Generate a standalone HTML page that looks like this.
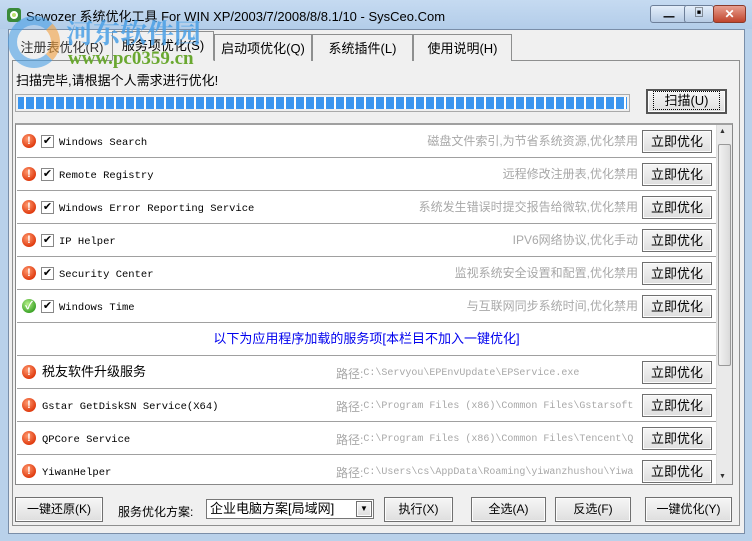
<!DOCTYPE html><html><head><meta charset="utf-8"><style>
*{box-sizing:border-box;margin:0;padding:0}
body{width:752px;height:541px;overflow:hidden;position:relative;background:#b9d1ea;font-family:"Liberation Sans","Noto Sans CJK SC",sans-serif;font-size:12px;color:#000}
.a{position:absolute}
.win{left:8px;top:29px;width:737px;height:505px;background:#f0f0f0;border:1px solid #7a8ea8}
.tab{top:34px;height:27px;background:#f0f0f0;border:1px solid #8e8f8f;border-bottom:none;text-align:center;line-height:27px;font-size:13px}
.btn{background:linear-gradient(#f6f6f6,#dedede);border:1px solid #707070;text-align:center;font-size:12px;box-shadow:inset 0 0 0 1px #fcfcfc}
.row{left:17px;width:699px;height:33px;border-bottom:1px solid #a0a0a0;background:#fff}
.ico{left:5px;top:9px;width:14px;height:14px;border-radius:50%;background:radial-gradient(circle at 40% 35%,#ff9a70,#e03c10 70%);color:#fff;font-weight:bold;font-size:11px;text-align:center;line-height:14px}
.ok{background:radial-gradient(circle at 40% 35%,#b8f08a,#3fa52a 70%)}
.cb{left:24px;top:10px;width:13px;height:13px;border:1px solid #888;background:#fff;font-size:11px;line-height:11px;text-align:center}
.nm{left:42px;top:12px;line-height:13px;height:13px;font-family:"Liberation Mono",monospace;font-size:10.5px;white-space:nowrap}
.ds{right:78px;top:0;line-height:32px;color:#a8a8a8;font-size:12px;white-space:nowrap}
.pt{left:319px;top:11px;line-height:14px;color:#a8a8a8;font-family:"Liberation Mono",monospace;font-size:10px;white-space:nowrap;width:301px;overflow:hidden}
.pt b{font-family:"Liberation Sans","Noto Sans CJK SC",sans-serif;font-size:12px;font-weight:normal;vertical-align:top;line-height:14px}
.rb{right:4px;top:5px;width:70px;height:23px;line-height:21px;font-size:13px}
</style></head><body>
<div class="a" style="left:0;top:0;width:752px;height:29px;background:linear-gradient(#c5daf1,#b3cde9)"></div>
<div class="a" style="left:7px;top:8px;width:14px;height:14px;border-radius:3px;background:#3a8a3a"><div class="a" style="left:3px;top:3px;width:8px;height:8px;border-radius:50%;background:#b8e070;border:2px solid #fff"></div></div>
<div class="a" style="left:26px;top:6px;font-size:13px;white-space:nowrap">Scwozer 系统优化工具 For WIN XP/2003/7/2008/8/8.1/10 - SysCeo.Com</div>
<div class="a" style="left:650px;top:5px;width:38px;height:18px;border:1px solid #6d7f99;border-radius:3px;background:linear-gradient(#e4eefa,#b6cbe4);text-align:center;line-height:14px;font-weight:bold;font-size:11px">▁</div>
<div class="a" style="left:684px;top:5px;width:30px;height:18px;border:1px solid #6d7f99;border-radius:3px;background:linear-gradient(#e4eefa,#b6cbe4);text-align:center;line-height:16px;font-size:10px">▣</div>
<div class="a" style="left:713px;top:5px;width:33px;height:18px;border:1px solid #8a3a2a;border-radius:3px;background:linear-gradient(#e8a090,#c0442c);color:#fff;text-align:center;line-height:17px;font-weight:bold">✕</div>
<div class="a win"></div>
<div class="a" style="left:12px;top:60px;width:728px;height:466px;border:1px solid #8e8f8f;background:#f0f0f0"></div>
<div class="a tab" style="left:12px;width:100px;border:none;background:transparent;color:#333">注册表优化(R)</div>
<div class="a tab" style="left:112px;width:102px;top:31px;height:30px;border-bottom:1px solid #f0f0f0">服务项优化(S)</div>
<div class="a tab" style="left:214px;width:98px">启动项优化(Q)</div>
<div class="a tab" style="left:312px;width:101px">系统插件(L)</div>
<div class="a tab" style="left:413px;width:99px">使用说明(H)</div>
<div class="a" style="left:8px;top:16px;width:52px;height:52px;border-radius:50%;border:9px solid #4aa0e6;border-right-color:#f0a040;opacity:.6"></div>
<div class="a" style="left:66px;top:12px;font-size:27px;font-weight:bold;color:#4aa0e6;opacity:.85;font-family:'Noto Serif CJK SC',serif;white-space:nowrap">河东软件园</div>
<div class="a" style="left:68px;top:48px;font-size:19px;font-weight:bold;color:#6aa830;font-family:'Liberation Serif',serif;white-space:nowrap">www.pc0359.cn</div>
<div class="a" style="left:16px;top:70px;font-size:13px">扫描完毕,请根据个人需求进行优化!</div>
<div class="a" style="left:15px;top:94px;width:615px;height:18px;border:1px solid #aaa;background:#fff;padding:2px;background-image:repeating-linear-gradient(90deg,#3b95ee 0 8px,#fff 8px 10px);background-clip:content-box"></div>
<div class="a btn" style="left:646px;top:89px;width:81px;height:25px;border:2px solid #555;line-height:20px;font-size:13px"><span style="border:1px dotted #000;padding:1px 10px">扫描(U)</span></div>
<div class="a" style="left:15px;top:123px;width:718px;height:362px;border:1px solid #888;background:#fff;border-top:2px solid #a0a0a0"></div>
<div class="a row" style="top:125px"><div class="a ico">!</div><div class="a cb">✔</div><div class="a nm">Windows Search</div><div class="a ds">磁盘文件索引,为节省系统资源,优化禁用</div><div class="a btn rb">立即优化</div></div>
<div class="a row" style="top:158px"><div class="a ico">!</div><div class="a cb">✔</div><div class="a nm">Remote Registry</div><div class="a ds">远程修改注册表,优化禁用</div><div class="a btn rb">立即优化</div></div>
<div class="a row" style="top:191px"><div class="a ico">!</div><div class="a cb">✔</div><div class="a nm">Windows Error Reporting Service</div><div class="a ds">系统发生错误时提交报告给微软,优化禁用</div><div class="a btn rb">立即优化</div></div>
<div class="a row" style="top:224px"><div class="a ico">!</div><div class="a cb">✔</div><div class="a nm">IP Helper</div><div class="a ds">IPV6网络协议,优化手动</div><div class="a btn rb">立即优化</div></div>
<div class="a row" style="top:257px"><div class="a ico">!</div><div class="a cb">✔</div><div class="a nm">Security Center</div><div class="a ds">监视系统安全设置和配置,优化禁用</div><div class="a btn rb">立即优化</div></div>
<div class="a row" style="top:290px"><div class="a ico ok">✓</div><div class="a cb">✔</div><div class="a nm">Windows Time</div><div class="a ds">与互联网同步系统时间,优化禁用</div><div class="a btn rb">立即优化</div></div>
<div class="a row" style="top:323px"><div class="a" style="left:0;width:699px;top:0;line-height:32px;text-align:center;color:#0000ee;font-size:13px">以下为应用程序加载的服务项[本栏目不加入一键优化]</div></div>
<div class="a row" style="top:356px"><div class="a ico">!</div><div class="a" style="left:25px;top:0;line-height:32px;font-size:13px">税友软件升级服务</div><div class="a pt"><b>路径:</b>C:\Servyou\EPEnvUpdate\EPService.exe</div><div class="a btn rb">立即优化</div></div>
<div class="a row" style="top:389px"><div class="a ico">!</div><div class="a nm" style="left:25px">Gstar GetDiskSN Service(X64)</div><div class="a pt"><b>路径:</b>C:\Program Files (x86)\Common Files\Gstarsoft</div><div class="a btn rb">立即优化</div></div>
<div class="a row" style="top:422px"><div class="a ico">!</div><div class="a nm" style="left:25px">QPCore Service</div><div class="a pt"><b>路径:</b>C:\Program Files (x86)\Common Files\Tencent\Q</div><div class="a btn rb">立即优化</div></div>
<div class="a row" style="top:455px;height:29px;border:none"><div class="a ico">!</div><div class="a nm" style="left:25px">YiwanHelper</div><div class="a pt"><b>路径:</b>C:\Users\cs\AppData\Roaming\yiwanzhushou\Yiwa</div><div class="a btn rb">立即优化</div></div>
<div class="a" style="left:716px;top:125px;width:16px;height:359px;background:#eaeaea;border-left:1px solid #ddd"></div>
<div class="a" style="left:719px;top:128px;font-size:7px;color:#333">▲</div>
<div class="a" style="left:719px;top:473px;font-size:7px;color:#333">▼</div>
<div class="a" style="left:718px;top:144px;width:13px;height:222px;border:1px solid #999;border-radius:2px;background:linear-gradient(90deg,#f2f2f2,#dadada)"></div>
<div class="a btn" style="left:15px;top:497px;width:88px;height:25px;line-height:23px">一键还原(K)</div>
<div class="a" style="left:118px;top:503px">服务优化方案:</div>
<div class="a" style="left:206px;top:499px;width:168px;height:20px;border:1px solid #777;background:#fff;line-height:18px;padding-left:3px;font-size:13px">企业电脑方案[局域网]</div>
<div class="a btn" style="left:356px;top:501px;width:16px;height:16px;font-size:8px;line-height:14px">▼</div>
<div class="a btn" style="left:384px;top:497px;width:69px;height:25px;line-height:23px">执行(X)</div>
<div class="a btn" style="left:471px;top:497px;width:75px;height:25px;line-height:23px">全选(A)</div>
<div class="a btn" style="left:555px;top:497px;width:76px;height:25px;line-height:23px">反选(F)</div>
<div class="a btn" style="left:645px;top:497px;width:87px;height:25px;line-height:23px">一键优化(Y)</div>
</body></html>
